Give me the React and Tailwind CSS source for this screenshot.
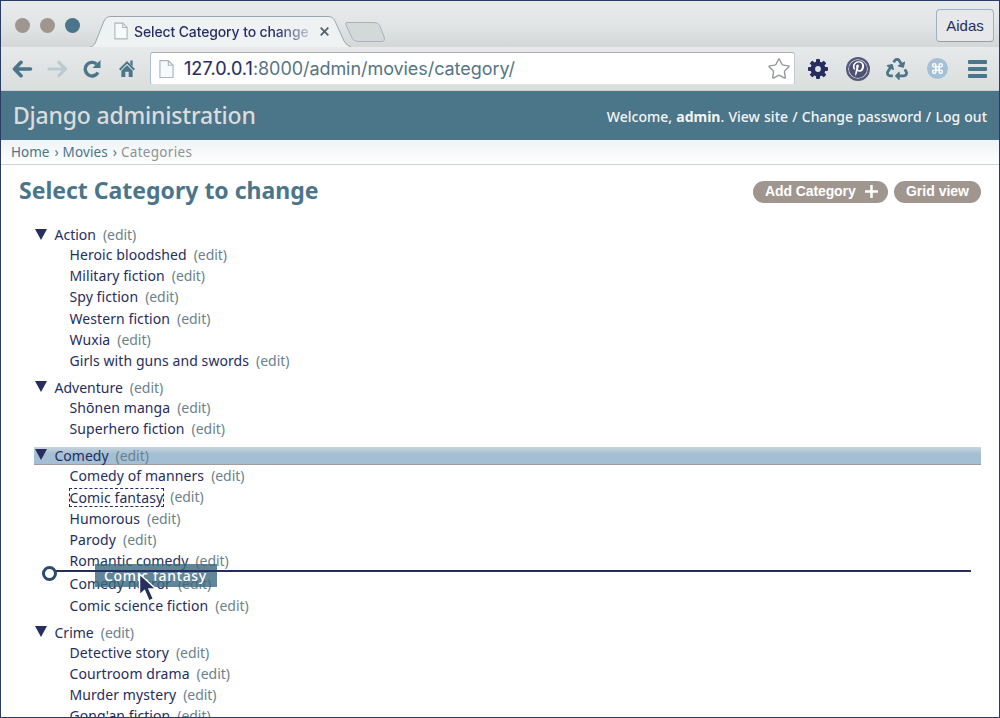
import { FaPinterestP, FaRecycle } from "react-icons/fa";
import { Command, Star } from "lucide-react";

const groups = [
  { name: "Action", items: ["Heroic bloodshed", "Military fiction", "Spy fiction", "Western fiction", "Wuxia", "Girls with guns and swords"] },
  { name: "Adventure", items: ["Shōnen manga", "Superhero fiction"] },
  { name: "Comedy", active: true, items: ["Comedy of manners", "Comic fantasy", "Humorous", "Parody", "Romantic comedy", "Comedy horror", "Comic science fiction"] },
  { name: "Crime", items: ["Detective story", "Courtroom drama", "Murder mystery", "Gong'an fiction"] },
];

function PageIcon({ className }) {
  return (
    <svg className={className} viewBox="0 0 16 20" fill="#f6fafb" stroke="#a9b4bc" strokeWidth="1.2">
      <path d="M1 1H10L15 6V19H1Z" />
      <path d="M10 1V6H15" fill="none" />
    </svg>
  );
}

function GearIcon() {
  return (
    <svg className="ml-[13px] size-[20px]" viewBox="-10 -10 20 20" fill="#262d5f">
      <path fillRule="evenodd" d="M-7.500 0A7.500 7.500 0 1 0 7.500 0A7.500 7.500 0 1 0 -7.500 0ZM-2.900 0A2.900 2.900 0 1 1 2.900 0A2.900 2.900 0 1 1 -2.900 0Z" />
      {[0, 45, 90, 135, 180, 225, 270, 315].map((a) => (
        <rect key={a} x="-2" y="-10" width="4" height="4.500" rx="1" transform={`rotate(${a})`} />
      ))}
    </svg>
  );
}

function Edit() {
  return <a className="ml-[7px] tracking-[-0.05px] text-[#6b828d]">(edit)</a>;
}

function TabStrip() {
  return (
    <div className="relative flex h-[46px] shrink-0 bg-linear-to-b from-[#e9eaeb] via-[#e2e5e6] to-[#d3d8d7]">
      <div className="flex gap-[10px] pt-[17px] pl-[14px]">
        <i className="size-[15px] rounded-full bg-[#9f9690]" />
        <i className="size-[15px] rounded-full bg-[#9f9690]" />
        <i className="size-[15px] rounded-full bg-[#4b7589]" />
      </div>
      <div className="relative ml-[10px] flex h-[46px] w-[262px]">
        <svg className="absolute inset-0 size-full" viewBox="0 0 262 46" fill="#eff2f3" stroke="#9aa6ae">
          <path d="M0 46C4 45 5 43 6 40L14 20Q16 15.500 21 15.500H238Q243 15.500 245 20L254 40Q257 45 261 46" />
        </svg>
        <div className="relative mt-[15px] flex h-[30px] w-full items-center pl-[24px]">
          <PageIcon className="h-[18px] w-[14px]" />
          <span className="ml-[6px] w-[176px] overflow-hidden bg-linear-to-r from-[#262d5f] from-80% to-[#c5c9d2] bg-clip-text font-['Inter','Noto_Sans',sans-serif] text-[14px] font-medium tracking-[-0.13px] whitespace-nowrap text-transparent">Select Category to change</span>
          <svg className="ml-[10px] size-[9px]" viewBox="0 0 9 9" stroke="#526373" strokeWidth="1.8"><path d="M.7.7 8.300 8.300M8.300.7.7 8.300" /></svg>
        </div>
      </div>
      <svg className="mt-[20px] -ml-[8px] h-[22px] w-[42px]" viewBox="0 0 42 22" fill="#d3d9d9" stroke="#a5b5c0">
        <path d="M3 1.500H30Q34 1.500 35.500 4L40.500 17Q41 20.500 38 20.500H14Q10 20.500 8 17L2 4Q1 1.500 3 1.500Z" />
      </svg>
      <button className="mt-[8px] mr-[5px] ml-auto h-[33px] w-[58px] rounded-[4px] border border-[#9cb3c4] border-b-[#9a9c9e] bg-[#e6e8e9] pt-[2px] font-['Liberation_Sans',sans-serif] text-[15px] text-[#262d5f]">Aidas</button>
    </div>
  );
}

function Toolbar() {
  return (
    <div className="flex h-[44px] shrink-0 items-center border-b border-[#cdd0ce] bg-linear-to-b from-[#e7e9ea] to-[#dadedd] pl-[11px]">
      <svg className="h-[18px] w-[21px]" viewBox="0 0 21 18" fill="none" stroke="#4b7589" strokeWidth="3.600" strokeLinecap="round" strokeLinejoin="round"><path d="M18.500 9H3M9 2.300 2.500 9 9 15.700" /></svg>
      <svg className="ml-[14px] h-[18px] w-[21px]" viewBox="0 0 21 18" fill="none" stroke="#bccad2" strokeWidth="3.200" strokeLinecap="round" strokeLinejoin="round"><path d="M2 9H18M12 2.300 18.500 9 12 15.700" /></svg>
      <svg className="ml-[15px] h-[18px] w-[19px]" viewBox="0 0 19 18"><path d="M15 12.500A6.800 6.800 0 1 1 13.500 4" fill="none" stroke="#4b7589" strokeWidth="3.400" /><path d="M17.500 0V8H9.500Z" fill="#4b7589" /></svg>
      <svg className="ml-[17px] h-[18px] w-[16px]" viewBox="0 0 17 18" fill="#4b7589"><path d="M8.500.5 17 9 15.500 10.500 8.500 3.500 1.500 10.500 0 9Z" /><path d="M12 0H14.500V6L12 4Z" /><path d="M2.500 10.800 8.500 5 14.500 10.800V17.500H10.300V12H6.700V17.500H2.500Z" /></svg>
      <div className="ml-[15px] flex h-[33px] w-[645px] items-center rounded-[3px] border border-t-[#a8afb2] border-r-[#c3cace] border-b-[#dfe3e4] border-l-[#a9c0d2] bg-white pl-[8px]">
        <PageIcon className="h-[20px] w-[15px]" />
        <span className="ml-[10px] pt-[1px] font-['Inter','Noto_Sans',sans-serif] text-[18px] leading-none tracking-[-0.06px] whitespace-nowrap text-[#567585]"><span className="tracking-[0.05px] text-[#262d5f] [-webkit-text-stroke:0.15px_#262d5f]">127.0.0.1</span>:8000/admin/movies/category/</span>
        <Star className="mr-[3px] ml-auto size-[24px] text-[#93989a]" strokeWidth={1.4} />
      </div>
      <GearIcon />
      <span className="ml-[18px] flex size-[24px] items-center justify-center rounded-full border-2 border-[#55597b] bg-[#4d5275] shadow-[inset_0_0_0_1px_#c9c8cd]"><FaPinterestP className="size-[15px] text-white" /></span>
      <FaRecycle className="ml-[16px] size-[22px] text-[#4b7589]" />
      <span className="ml-[19px] flex size-[21px] items-center justify-center rounded-full bg-[#a4c0d5]"><Command className="size-[13px] text-white" strokeWidth={2.6} /></span>
      <div className="ml-[20px] flex flex-col gap-[3px]">
        <i className="h-[4px] w-[19px] rounded-[1px] bg-[#4b7589]" />
        <i className="h-[4px] w-[19px] rounded-[1px] bg-[#4b7589]" />
        <i className="h-[4px] w-[19px] rounded-[1px] bg-[#4b7589]" />
      </div>
    </div>
  );
}

function Group({ group }) {
  return (
    <li className="mb-[7px]">
      <div className={group.active ? "flex h-[18px] items-center border-b border-[#a59d99] bg-linear-to-b from-[#c9d4dc] to-[#a4bfd4] to-40%" : "flex h-[18px] items-center"}>
        <svg className="mb-[2px] ml-[1px] h-[11px] w-[12px]" viewBox="0 0 12 11" fill="#262d5f"><path d="M0 0H12L6 11Z" /></svg>
        <span className="ml-[7.500px]">{group.name}</span>
        <Edit />
      </div>
      <ul className="pt-[0.500px] pb-[0.500px] pl-[35.500px]">
        {group.items.map((name) => (
          <li key={name} className={name === "Romantic comedy" ? "mb-[2.300px] flex h-[21.170px] items-center" : "flex h-[21.170px] items-center"}>
            <span className={name === "Comic fantasy" ? "-mx-px border border-dashed border-[#262d5f] leading-[17px] tracking-[0.1px]" : "tracking-[0.08px]"}>{name}</span>
            <Edit />
          </li>
        ))}
      </ul>
    </li>
  );
}

export default function App() {
  return (
    <div className="relative flex h-[718px] w-[1000px] flex-col overflow-hidden border border-[#2b3b66] bg-white font-['Noto_Sans',sans-serif] text-[#262d5f]">
      <TabStrip />
      <Toolbar />
      <header className="flex h-[49px] shrink-0 items-center justify-between bg-[#4b7589] pr-[12px] pb-[1px] pl-[12px]">
        <h1 className="text-[23px] font-medium tracking-[-0.2px] text-[#dadddb]">Django administration</h1>
        <p className="pt-[2px] text-[14px] font-medium [word-spacing:0.550px] text-[#f3f5f6]">Welcome, <b>admin</b>. View site / Change password / Log out</p>
      </header>
      <nav className="flex h-[25px] shrink-0 items-center gap-[5px] border-b border-[#cfd4d4] bg-linear-to-b from-[#eef3f5] to-white pt-[1px] pl-[10px] text-[13.500px] text-[#4b7589]">
        <a>Home</a><span className="-mr-px">›</span><a className="tracking-[0.1px]">Movies</a><span className="-mr-px">›</span><span className="tracking-[0.3px] text-[#8e9293]">Categories</span>
      </nav>
      <main className="px-[18px] pt-[11px]">
        <div className="flex h-[30px] items-center justify-between">
          <h2 className="pb-[2px] text-[23px] font-bold text-[#4b7589]">Select Category to change</h2>
          <div className="flex gap-[6px] pt-[1px] font-['Liberation_Sans',sans-serif] text-[14px] font-bold text-white">
            <a className="flex h-[22px] w-[135px] items-center rounded-full bg-[#9f9690] pl-[12px] tracking-[-0.1px]">Add Category<svg className="ml-[9px] size-[13px]" viewBox="0 0 13 13" stroke="white" strokeWidth="2.500"><path d="M6.500 0V13M0 6.500H13" /></svg></a>
            <a className="flex h-[22px] w-[87px] items-center justify-center rounded-full bg-[#9f9690]">Grid view</a>
          </div>
        </div>
        <ul className="mt-[20px] ml-[15px] text-[14px] leading-[18px] whitespace-nowrap">
          {groups.map((g) => <Group key={g.name} group={g} />)}
        </ul>
      </main>
      <div className="absolute top-[563px] left-[94px] flex h-[23px] w-[122px] items-center bg-[#3a687e]/80 pl-[9px] text-[14px] font-medium tracking-[0.65px] text-white">Comic fantasy</div>
      <div className="absolute top-[569px] left-[54px] h-[2px] w-[916px] bg-[#262d5f]" />
      <div className="absolute top-[565px] left-[41px] size-[15px] rounded-full border-[3px] border-[#2c4a6c] bg-white" />
      <svg className="absolute top-[571px] left-[137px] h-[32px] w-[21px]" viewBox="0 0 21 32" fill="#262d5f" stroke="white" strokeWidth="1.500"><path d="M1.500 2V23L6.500 18.500 11 29 15.500 27 11 17H18Z" /></svg>
    </div>
  );
}
